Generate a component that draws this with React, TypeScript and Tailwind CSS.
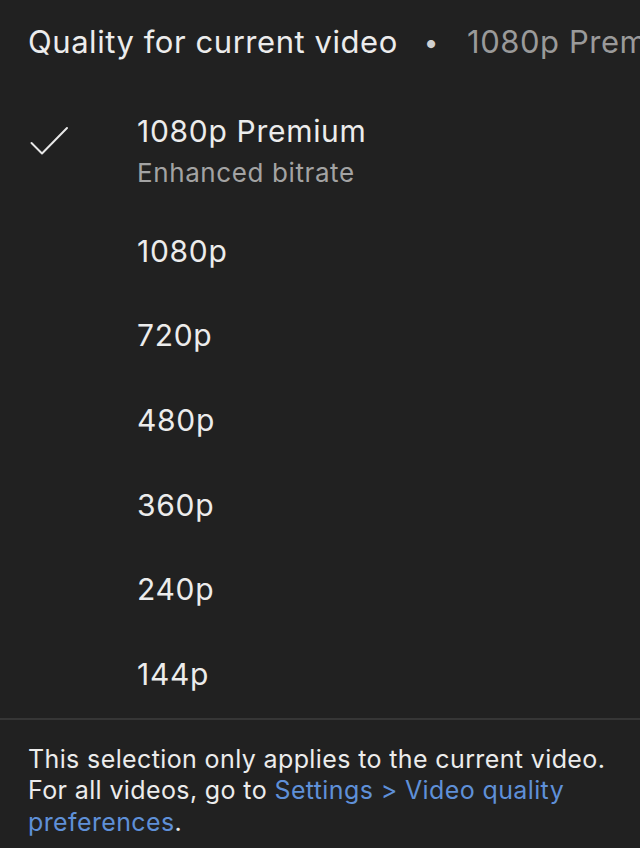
const options = ["1080p", "720p", "480p", "360p", "240p", "144p"];

const Check = () => (
  <svg width="40" height="40" viewBox="0 0 40 40" fill="none">
    <path d="M1.5 23 L12 33.5 L37 8" stroke="#e8e8e8" strokeWidth="2" strokeLinecap="round" strokeLinejoin="round" />
  </svg>
);

const App = () => {
  return (
    <div className="w-[640px] h-[848px] overflow-hidden bg-[#212121] text-[#ececec] font-['Inter',sans-serif]">
      <div className="flex h-[84px] items-center whitespace-nowrap pl-[28px] text-[31px] tracking-[0.55px]">
        <span>Quality for current video</span>
        <span className="ml-[26px] mr-[28px] text-[26px] text-[#d0d0d0]">•</span>
        <span className="text-[#9a9a9a]">1080p Premium</span>
      </div>

      <div className="flex h-[125px]">
        <div className="w-[137px] pl-[30px] pt-[36px]">
          <Check />
        </div>
        <div className="pt-[29px]">
          <div className="text-[30px] leading-[36px] tracking-[0.7px]">1080p Premium</div>
          <div className="mt-[6px] text-[26px] leading-[36px] tracking-[0.6px] text-[#a3a3a3]">Enhanced bitrate</div>
        </div>
      </div>

      {options.map((o) => (
        <div key={o} className="flex h-[84.6px] items-center pl-[137px] text-[30px] tracking-[0.7px]">
          {o}
        </div>
      ))}

      <div className="mt-[1px] border-t-2 border-[#363636] px-[28px] pt-[24px] text-[25px] leading-[31.5px] tracking-[0.38px]">
        This selection only applies to the current video.
        <br />
        For all videos, go to <span className="text-[#5f90d8]">Settings &gt; Video quality</span>
        <br />
        <span className="text-[#5f90d8]">preferences</span>.
      </div>
    </div>
  );
};

export default App;
